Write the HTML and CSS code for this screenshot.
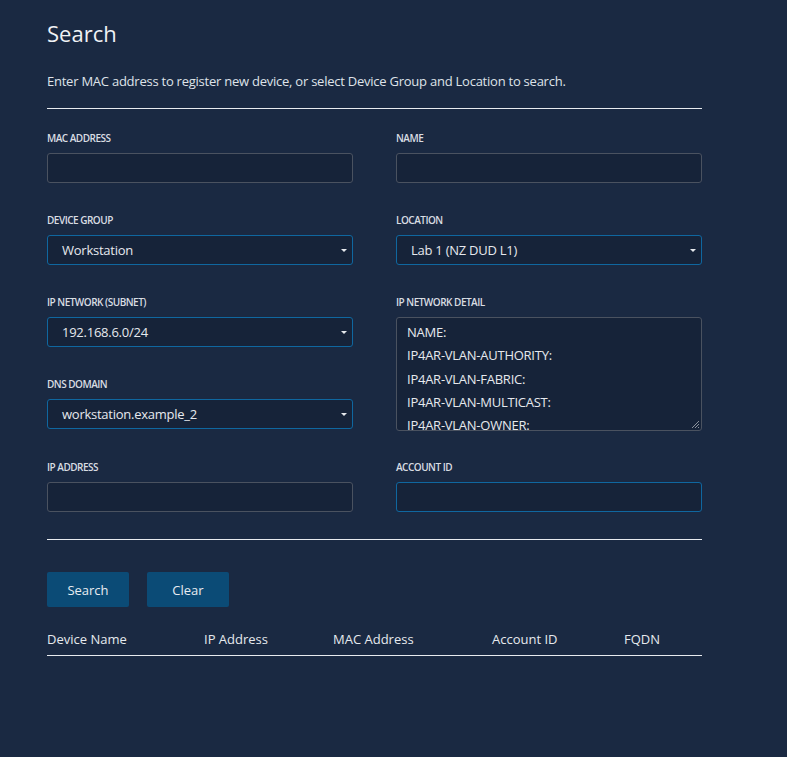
FILE: index.html
```html
<!DOCTYPE html>
<html>
<head>
<meta charset="utf-8">
<link rel="stylesheet" href="styles.css">
</head>
<body>
<main class="page">
  <h1 class="title">Search</h1>
  <p class="intro">Enter MAC address to register new device, or select Device Group and Location to search.</p>
  <hr class="rule">
  <form class="form">
    <div class="field">
      <label class="label">MAC ADDRESS</label>
      <div class="input"></div>
    </div>
    <div class="field">
      <label class="label">NAME</label>
      <div class="input"></div>
    </div>
    <div class="field">
      <label class="label">DEVICE GROUP</label>
      <div class="input select"><span>Workstation</span><i class="caret"></i></div>
    </div>
    <div class="field">
      <label class="label">LOCATION</label>
      <div class="input select"><span>Lab 1 (NZ DUD L1)</span><i class="caret"></i></div>
    </div>
    <div class="field">
      <label class="label">IP NETWORK (SUBNET)</label>
      <div class="input select"><span>192.168.6.0/24</span><i class="caret"></i></div>
    </div>
    <div class="field detail">
      <label class="label">IP NETWORK DETAIL</label>
      <div class="textarea">
        <div class="lines">
          <div>NAME:</div>
          <div>IP4AR-VLAN-AUTHORITY:</div>
          <div>IP4AR-VLAN-FABRIC:</div>
          <div>IP4AR-VLAN-MULTICAST:</div>
          <div>IP4AR-VLAN-OWNER:</div>
        </div>
        <svg class="grip" width="9" height="9" viewBox="0 0 9 9"><path d="M8 1L1 8M8 4L4 8M8 7L7 8" stroke="#8a919c" stroke-width="1"/></svg>
      </div>
    </div>
    <div class="field">
      <label class="label">DNS DOMAIN</label>
      <div class="input select"><span>workstation.example_2</span><i class="caret"></i></div>
    </div>
    <div class="field lastrow">
      <label class="label">IP ADDRESS</label>
      <div class="input"></div>
    </div>
    <div class="field lastrow">
      <label class="label">ACCOUNT ID</label>
      <div class="input focus"></div>
    </div>
  </form>
  <hr class="rule rule2">
  <div class="actions">
    <button class="btn" type="button">Search</button>
    <button class="btn" type="button">Clear</button>
  </div>
  <div class="thead">
    <span>Device Name</span>
    <span>IP Address</span>
    <span>MAC Address</span>
    <span>Account ID</span>
    <span>FQDN</span>
  </div>
</main>
</body>
</html>
```

FILE: styles.css
```css
html, body {
  margin: 0;
  padding: 0;
  background: #1a2942;
  height: 100%;
}
body {
  font-family: "Open Sans", "Noto Sans", sans-serif;
  color: #e6e9ee;
}
.page {
  width: 655px;
  padding: 19px 0 0 47px;
}
.title {
  margin: 0;
  font-size: 22px;
  font-weight: 400;
  line-height: 28px;
  color: #f0f2f5;
}
.intro {
  margin: 25px 0 0;
  font-size: 13px;
  line-height: 18px;
  letter-spacing: -0.24px;
  color: #dfe3e9;
}
.rule {
  margin: 18px 0 0;
  border: 0;
  height: 1px;
  background: #e8ebef;
}
.form {
  display: grid;
  grid-template-columns: 306px 306px;
  column-gap: 43px;
  row-gap: 31px;
  margin-top: 23px;
}
.field {
  display: flex;
  flex-direction: column;
}
.lastrow {
  margin-top: 1px;
}
.detail {
  grid-row: span 2;
  margin-bottom: -3px;
}
.label {
  font-size: 10px;
  font-weight: 600;
  line-height: 12px;
  margin-bottom: 9px;
  color: #d9dde3;
  letter-spacing: -0.5px;
}
.input {
  box-sizing: border-box;
  height: 30px;
  border: 1px solid #4a5260;
  border-radius: 3px;
  background: #162339;
  display: flex;
  align-items: center;
  padding: 0 14px;
  font-size: 13px;
  letter-spacing: -0.25px;
  color: #e6e9ee;
}
.select {
  border-color: #0f67a0;
  justify-content: space-between;
}
.focus {
  border-color: #0f67a0;
}
.caret {
  width: 0;
  height: 0;
  border-left: 3px solid transparent;
  border-right: 3px solid transparent;
  border-top: 3px solid #e6e9ee;
  margin-right: -9px;
}
.textarea {
  position: relative;
  box-sizing: border-box;
  height: 114px;
  border: 1px solid #4a5260;
  border-radius: 3px;
  background: #162339;
  overflow: hidden;
  padding: 3px 10px 0;
  font-size: 13px;
  line-height: 23.3px;
  letter-spacing: -0.25px;
  color: #e6e9ee;
}
.grip {
  position: absolute;
  right: 1px;
  bottom: 1px;
}
.rule2 {
  margin-top: 27px;
}
.actions {
  display: flex;
  gap: 18px;
  margin-top: 32px;
}
.btn {
  width: 82px;
  height: 35px;
  border: 0;
  border-radius: 2px;
  background: #0b4b76;
  color: #e8ecf1;
  font-family: inherit;
  font-size: 13px;
  padding: 0;
}
.thead {
  display: grid;
  grid-template-columns: 157px 129px 159px 132px 78px;
  margin-top: 23px;
  padding-bottom: 7px;
  border-bottom: 1px solid #e8ebef;
  font-size: 13px;
  line-height: 18px;
  color: #e6e9ee;
}
```
